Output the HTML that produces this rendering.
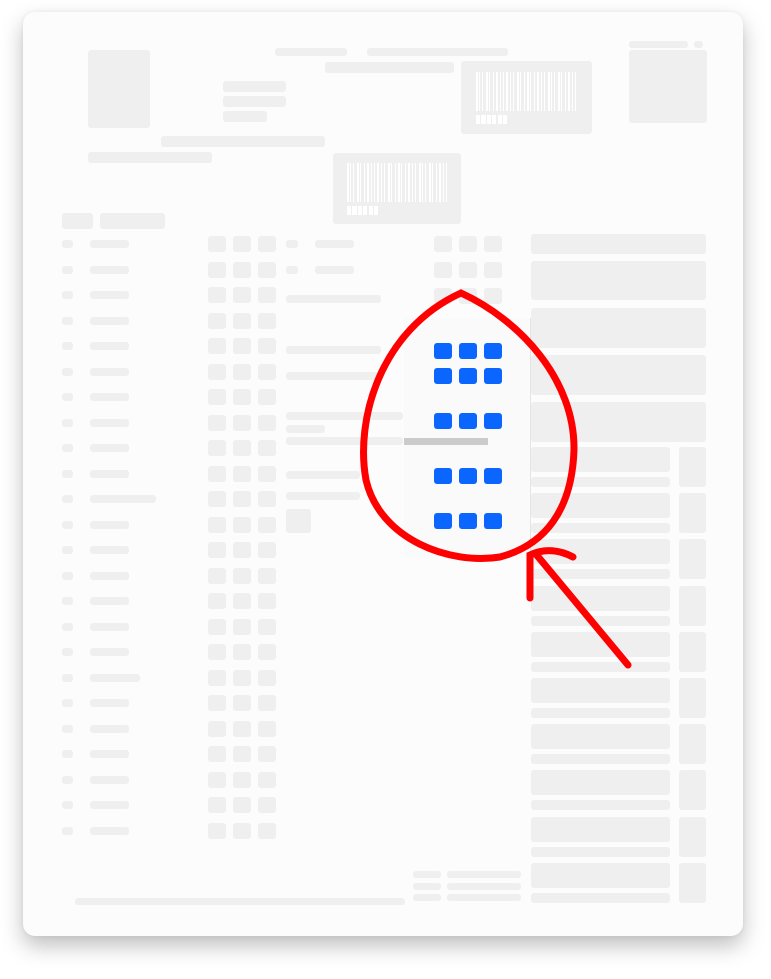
<!DOCTYPE html><html><head><style>
body{margin:0;width:771px;height:979px;background:#fff;position:relative;overflow:hidden;font-family:"Liberation Sans",sans-serif}
.card{position:absolute;left:23px;top:12px;width:720px;height:924px;background:#fcfcfc;border-radius:12px;box-shadow:0 10px 22px rgba(0,0,0,.25),0 0 5px rgba(0,0,0,.06)}
.b{position:absolute;background:#efefef;border-radius:3px}
.w{position:absolute;background:#fff}
.bl{position:absolute;background:#0a66ff;border-radius:3px;width:18px;height:16px}
</style></head><body>
<div class="card"></div>
<div id="c"></div>
<svg style="position:absolute;left:0;top:0" width="771" height="979">
<path d="M461 293 C520 320 575 380 574 450 C572 510 545 545 500 557 C450 565 380 540 366 480 C355 420 380 330 461 293 Z" fill="none" stroke="#f00" stroke-width="7" stroke-linecap="round"/>
<path d="M628 665 L535 553 M530 598 L530 555 C545 548 560 550 573 557" fill="none" stroke="#f00" stroke-width="7" stroke-linecap="round"/>
</svg>
<script>
var h='';function b(x,y,w,ht,c){h+='<div class="'+(c||'b')+'" style="left:'+x+'px;top:'+y+'px;width:'+w+'px;height:'+ht+'px"></div>';}
b(88,50,62,78);b(223,81,63,11);b(223,96,63,11);b(223,111,44,11);
b(275,48,72,8);b(367,48,141,8);b(325,62,129,11);b(161,136,164,11);b(88,152,124,11);
b(461,61,131,73);b(333,153,128,71);b(629,41,59,7);b(694,41,9,7);b(629,50,78,73);
function bc(x,y,w){for(var i=0;i<30;i++){var xx=x+Math.floor(i*w/30);h+='<div class="w" style="left:'+xx+'px;top:'+y+'px;width:'+(i%3?1:2)+'px;height:39px"></div>';}for(var j=0;j<6;j++)b(x+j*5.4,y+43,4.2,9,'w');}
bc(476,72,103);bc(347,163,103);
b(62,213,31,16);b(100,213,65,16);
var rows=[244,270,295,321,346,372,397,423,448,474,499,525,550,576,601,627,652,678,703,729,754,780,805,831];
rows.forEach(function(y,i){b(62,y-4,11,8);b(90,y-4,i==10?66:(i==17?50:39),8);b(208,y-8,18,16);b(233,y-8,18,16);b(258,y-8,18,16);});
[244,270].forEach(function(y){b(286,y-4,12,8);b(315,y-4,39,8);b(434,y-8,18,16);b(459,y-8,18,16);b(484,y-8,18,16);});
b(434,288,18,16);b(459,288,18,16);b(484,288,18,16);
b(286,295,95,8);b(286,346,95,8);b(286,372,95,8);b(286,412,117,8);b(286,425,39,8);b(286,437,117,8);b(286,471,74,8);b(286,492,74,8);b(286,509,25,24);
h+='<div style="position:absolute;left:404px;top:318px;width:126px;height:240px;background:#fafafa;border-right:1px solid #e4e4e4"></div>';
h+='<div style="position:absolute;left:404px;top:438px;width:84px;height:7px;background:#cbcbcb"></div>';
[343,368,413,468,513].forEach(function(y){[434,459,484].forEach(function(x){b(x,y,18,16,'bl');});});
b(531,234,175,20);b(531,261,175,39);b(531,308,175,40);b(531,355,175,40);b(531,402,175,40);
for(var k=0;k<10;k++){var y=447+k*46.2;b(531,y,139,25);b(531,y+30,139,10);b(679,y,27,40);}
b(75,898,330,7);[871,883,894].forEach(function(y){b(413,y,28,7);b(447,y,74,7);});
document.getElementById('c').innerHTML=h;
</script>
</body></html>
